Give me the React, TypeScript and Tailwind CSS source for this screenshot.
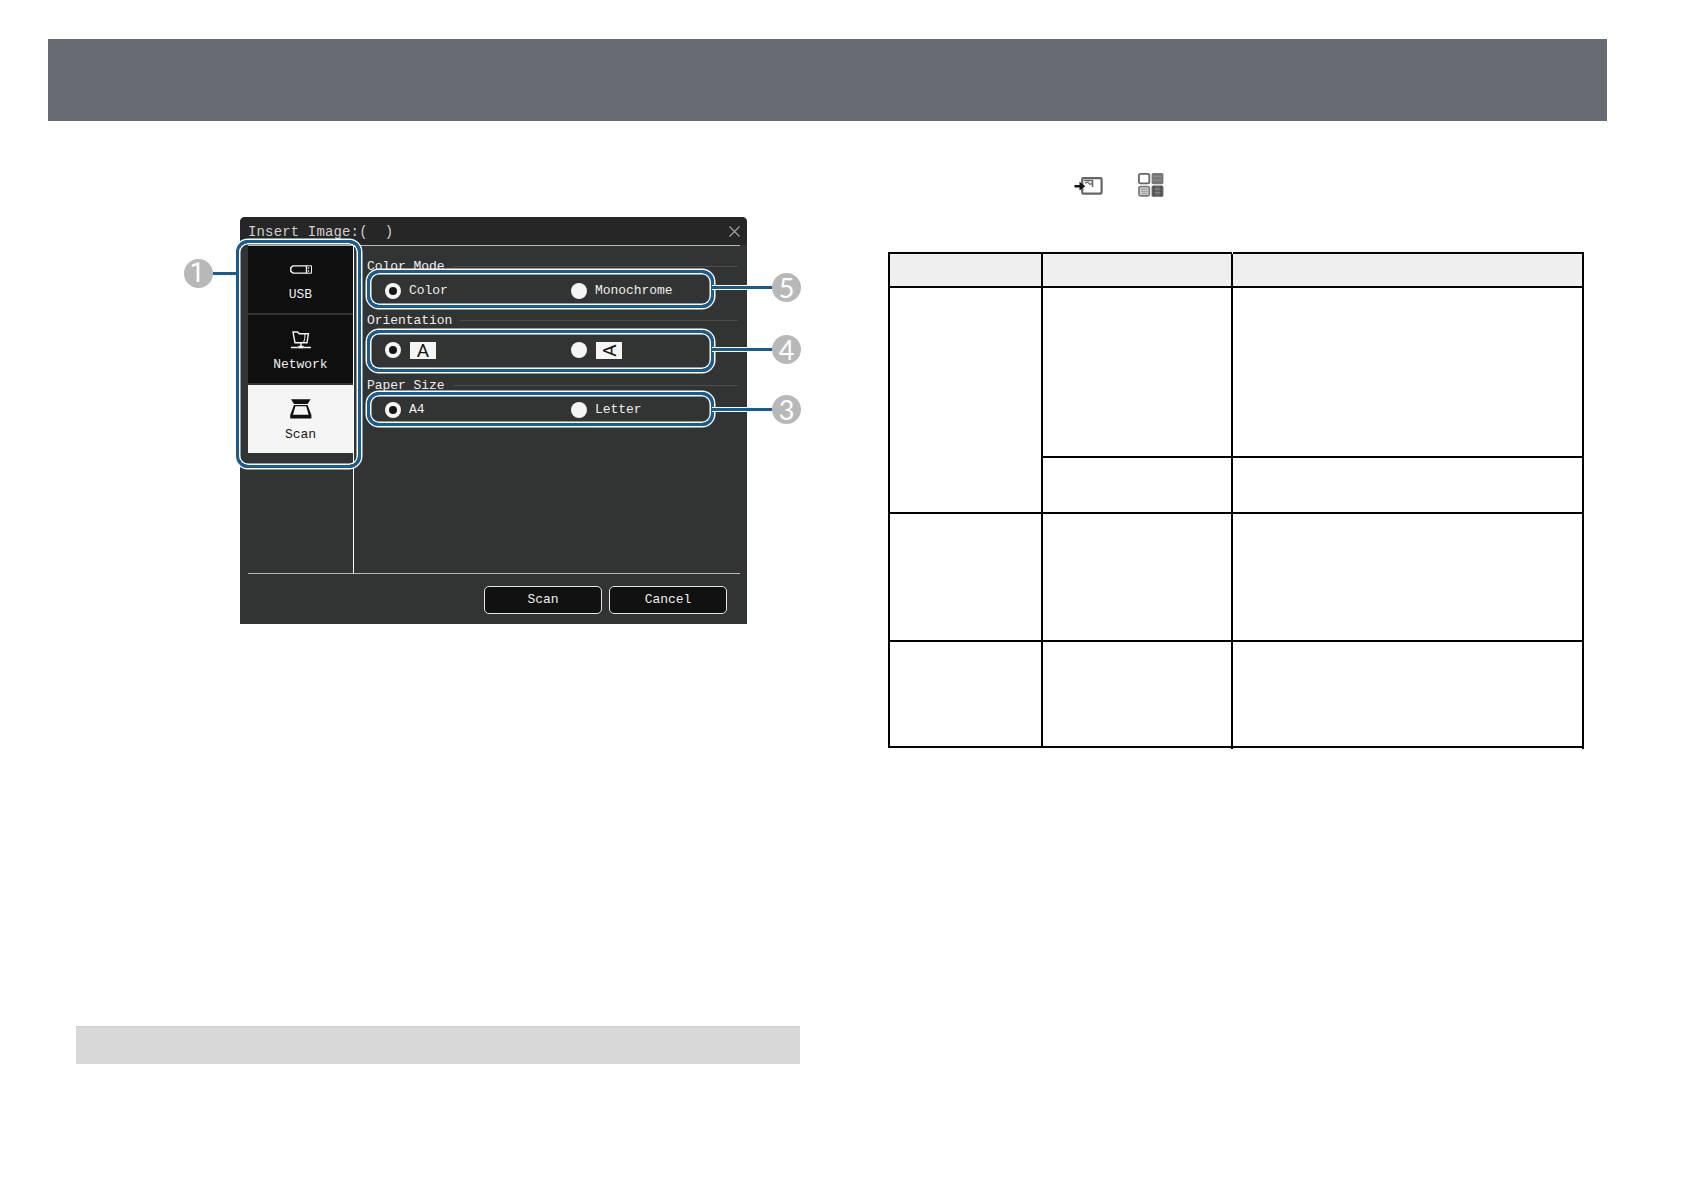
import { clsx } from 'clsx';
import type { ReactNode } from 'react';

const sections = [
    { title: 'Color Mode', options: ['Color', 'Monochrome'], row: 'h-[30px] mb-1' },
    { title: 'Orientation', options: ['portrait', 'landscape'], row: 'h-10 mb-[5px]' },
    { title: 'Paper Size', options: ['A4', 'Letter'], row: 'h-[30px]' },
];

// outlines drawn over the dialog, relative to its top left corner
const outlines = [
    'left-[-4px] top-[23px] w-[125px] h-[228px] rounded-[12px]',
    'left-[127px] top-[53px] w-[347px] h-[38px] rounded-[12px]',
    'left-[127px] top-[113px] w-[347px] h-[42px] rounded-[12px]',
    'left-[127px] top-[175px] w-[347px] h-[34px] rounded-[12px]',
];

const callouts = [
    { label: '5', pos: 'top-[56px]' },
    { label: '4', pos: 'top-[118px]' },
    { label: '3', pos: 'top-[178px]' },
];

function UsbIcon() {
    return (
        <svg width="22" height="9" viewBox="0 0 22 9" fill="none" stroke="#f5f5f5">
            <path d="M16.5 .9H3L.8 2.6v3.8L3 8.1h13.5z" strokeWidth="1.4" />
            <path d="M16.5 .8h5v7.4h-5" strokeWidth="1" />
            <path d="M18.6 2.3v1.4M18.6 5.3v1.4" strokeWidth="1.2" />
        </svg>
    );
}

function NetworkIcon() {
    return (
        <svg width="20" height="18" viewBox="0 0 20 18" fill="none" stroke="#f5f5f5" strokeWidth="1.4">
            <path d="M4 11.8L2 1h4.6l1.6 1.8h9.2L16 11.8z" />
            <path d="M14 3l-.2 4.5-1.2 3.8" strokeWidth="1" />
            <path d="M10 12v4M0 16.5h7M13 16.5h7" />
            <path d="M7.2 14.8h5.6v2.6H7.2z" fill="#f5f5f5" stroke="none" />
        </svg>
    );
}

function ScanIcon() {
    return (
        <svg width="22" height="20" viewBox="0 0 22 20" fill="#111">
            <path d="M1 .2h19.6l-3 4.9H4z" />
            <path
                fillRule="evenodd"
                d="M4 5.9h13.6L21.4 16v3.4H.2V16zM5.4 7.3L3 15.8h15.6L16.2 7.3z"
            />
        </svg>
    );
}

function InsertIcon() {
    return (
        <svg width="30" height="20" viewBox="0 0 30 20" fill="none" className="relative top-px">
            <rect x="8.2" y="2.2" width="19.4" height="15.4" rx="1" stroke="#666" strokeWidth="2.2" />
            <path d="M10 4.5h8.5v6.5" stroke="#666" strokeWidth="1.6" />
            <path d="M11 7.2l3-1.2 2 2.4 2-1" stroke="#777" strokeWidth="1.4" />
            <path d="M.5 9h5V5.8l5.8 4.4-5.8 4.4v-3.1h-5z" fill="#151515" />
        </svg>
    );
}

function GridIcon() {
    return (
        <svg width="28" height="26" viewBox="0 0 28 26">
            <rect x="1.9" y="1.9" width="10.4" height="9.4" rx="1.6" fill="#fff" stroke="#666" strokeWidth="1.8" />
            <rect x="14.6" y="1" width="11.8" height="11.2" rx="1.6" fill="#777" />
            <path d="M16 4.3h9M16 8.2h9" stroke="#929292" />
            <rect x="1.9" y="14.5" width="10.4" height="9.4" rx="1.6" fill="#ccc" stroke="#777" strokeWidth="1.6" />
            <path d="M3.8 17h6.8M3.8 19.2h6.8M5 21.4h5" stroke="#999" />
            <rect x="14.6" y="13.6" width="11.8" height="11.2" rx="1.6" fill="#606060" />
            <path d="M17 17h7.5M17 20.8h7.5" stroke="#929292" />
            <path d="M17 14v10.4M24 14v10.4" stroke="#444" />
        </svg>
    );
}

const tabs = [
    { name: 'USB', icon: <UsbIcon />, box: 'h-[67px]', iconBox: 'mt-[19px] h-[10px]', text: 'mt-[10px]' },
    { name: 'Network', icon: <NetworkIcon />, box: 'h-[68px]', iconBox: 'mt-[16px] h-[19px]', text: 'mt-[5px]' },
    { name: 'Scan', icon: <ScanIcon />, box: 'h-[68px]', iconBox: 'mt-[14px] h-[20px]', text: 'mt-[6px]', active: true },
];

function Radio({ checked }: { checked?: boolean }) {
    return (
        <span className="flex size-4 items-center justify-center rounded-full bg-[#f5f5f5]">
            {checked && <span className="size-2 rounded-full bg-[#161616]" />}
        </span>
    );
}

function OptionLabel({ option }: { option: string }) {
    if (option === 'portrait' || option === 'landscape') {
        return (
            <span className="flex h-[17px] w-[26px] items-center justify-center bg-[#f5f5f5] font-['Roboto',sans-serif] text-[19px] leading-none text-[#111]">
                <span className={clsx(option === 'landscape' && '-rotate-90')}>A</span>
            </span>
        );
    }
    return <span className="-ml-px">{option}</span>;
}

function Button({ children }: { children: ReactNode }) {
    return (
        <button className="flex h-7 w-[118px] items-center justify-center rounded-[5px] border border-[#e4e4e4] bg-[#111]">
            {children}
        </button>
    );
}

function Badge({ children, className }: { children: ReactNode; className?: string }) {
    return (
        <span
            className={clsx(
                'flex size-[29px] shrink-0 items-center justify-center rounded-full bg-[#b8b8b8] text-[27px] leading-none text-white',
                className ?? "font-['Lato',sans-serif]",
            )}
        >
            {children}
        </span>
    );
}

function Dialog() {
    return (
        <div className="relative ml-[164px] h-[407px] w-[507px] font-['Liberation_Mono',monospace] text-[13px] leading-5 tracking-[-0.05px] text-[#eee]">
            <div className="flex h-full flex-col overflow-hidden rounded-t-[5px] bg-[#323333]">
                <div className="flex h-7 items-center justify-between bg-[#262626] pr-[7px] pl-2">
                    <span className="mt-0.5 text-[14px] tracking-[0.15px] whitespace-pre text-[#d0d0d0]">
                        Insert Image:(  )
                    </span>
                    <svg width="11" height="11" viewBox="0 0 11 11" stroke="#a5a5a5" strokeWidth="1.1">
                        <path d="M.5 .5l10 10M10.5 .5l-10 10" />
                    </svg>
                </div>
                <div className="mr-[7px] ml-2 flex h-[329px] border-y border-[#b9bab8]">
                    <div className="flex w-[106px] flex-col gap-0.5 border-r border-white">
                        {tabs.map((tab) => (
                            <div
                                key={tab.name}
                                className={clsx(
                                    'flex flex-col items-center',
                                    tab.box,
                                    tab.active ? 'bg-[#f5f5f5] text-[#161616]' : 'bg-[#0f0f0f]',
                                )}
                            >
                                <div className={tab.iconBox}>{tab.icon}</div>
                                <span className={tab.text}>{tab.name}</span>
                            </div>
                        ))}
                    </div>
                    <div className="flex-1 pt-2.5 pr-0.5 pl-[13px]">
                        {sections.map(({ title, options, row }) => (
                            <div key={title}>
                                <div className="flex h-5 items-center gap-2">
                                    <span className="mt-0.5">{title}</span>
                                    <span className="h-px flex-1 bg-[#4c4d4c]" />
                                </div>
                                <div className={clsx('flex items-center pl-[18px]', row)}>
                                    {options.map((option, i) => (
                                        <div key={option} className="flex w-[186px] items-center gap-[9px] last:w-auto">
                                            <Radio checked={i === 0} />
                                            <OptionLabel option={option} />
                                        </div>
                                    ))}
                                </div>
                            </div>
                        ))}
                    </div>
                </div>
                <div className="flex justify-end gap-[7px] pt-3 pr-5">
                    <Button>Scan</Button>
                    <Button>Cancel</Button>
                </div>
            </div>

            {outlines.map((box) => (
                <div
                    key={box}
                    className={clsx(
                        'absolute border-[3px] border-[#155d96] shadow-[0_0_0_1.5px_#fff,inset_0_0_0_1.5px_#fff]',
                        box,
                    )}
                />
            ))}

            <div className="absolute top-[42px] left-[-56px] flex items-center">
                <Badge className="pr-[3px] font-['Roboto',sans-serif]">1</Badge>
                <span className="h-[3px] w-6 bg-[#155d96]" />
            </div>
            {callouts.map(({ label, pos }) => (
                <div key={label} className={clsx('absolute left-[472px] flex items-center', pos)}>
                    <span className="h-[3px] w-[60px] bg-[#155d96] shadow-[0_-1px_0_#fff,0_1px_0_#fff]" />
                    <Badge>{label}</Badge>
                </div>
            ))}
        </div>
    );
}

function SettingsTable() {
    return (
        <div className="relative mt-[54px] grid w-[696px] grid-cols-[151px_188px_349px] grid-rows-[32px_168px_54px_126px_104px] gap-0.5 bg-black p-0.5">
            <div className="bg-[#efefef]" />
            <div className="bg-[#efefef]" />
            <div className="bg-[#efefef]" />
            <div className="row-span-2 bg-white" />
            {Array.from({ length: 10 }, (_, i) => (
                <div key={i} className="bg-white" />
            ))}
            {/* uneven joins of the rules */}
            <span className="absolute top-0 left-[344px] h-0.5 w-px bg-white" />
            <span className="absolute -bottom-px left-[343px] h-px w-0.5 bg-black" />
            <span className="absolute right-0 -bottom-px h-px w-0.5 bg-black" />
        </div>
    );
}

export default function App() {
    return (
        <div className="h-[1190px] w-[1684px] overflow-hidden bg-white pt-[39px]">
            <header className="ml-12 h-[82px] w-[1559px] bg-[#676b73]" />
            <main className="flex pl-[76px]">
                <div className="w-[812px] pt-24">
                    <Dialog />
                    <div className="mt-[402px] h-[38px] w-[724px] border-t border-[#cfcfcf] bg-[#d8d8d8]" />
                </div>
                <div className="pt-[51px]">
                    <div className="flex h-[26px] items-center gap-[33px] pl-[186px]">
                        <InsertIcon />
                        <GridIcon />
                    </div>
                    <SettingsTable />
                </div>
            </main>
        </div>
    );
}
